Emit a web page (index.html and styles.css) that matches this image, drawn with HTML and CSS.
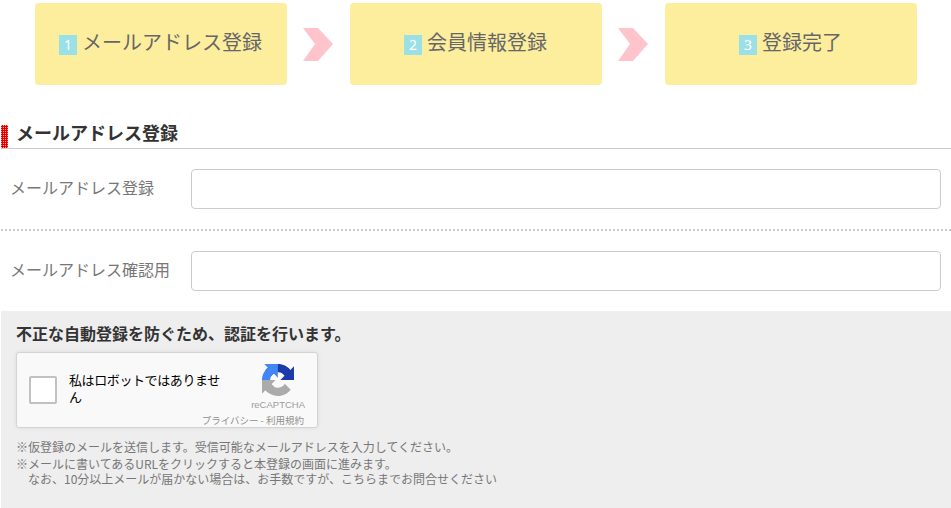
FILE: index.html
```html
<!DOCTYPE html>
<html lang="ja">
<head>
<meta charset="utf-8">
<title>メールアドレス登録</title>
<link rel="stylesheet" href="styles.css">
</head>
<body>
<div class="steps">
  <div class="step"><span class="num">1</span><span class="step-label">メールアドレス登録</span></div>
  <svg class="arrow" viewBox="0 0 30 33"><polygon points="0,0 15,0 30,16 15,33 0,33 12,16"/></svg>
  <div class="step"><span class="num">2</span><span class="step-label">会員情報登録</span></div>
  <svg class="arrow" viewBox="0 0 30 33"><polygon points="0,0 15,0 30,16 15,33 0,33 12,16"/></svg>
  <div class="step"><span class="num">3</span><span class="step-label">登録完了</span></div>
</div>
<main class="content">
  <h2 class="section-title"><span class="marker"></span>メールアドレス登録</h2>
  <div class="row row-first">
    <label class="row-label">メールアドレス登録</label>
    <input class="field" type="text">
  </div>
  <div class="row row-second">
    <label class="row-label">メールアドレス確認用</label>
    <input class="field" type="text">
  </div>
  <section class="verify">
    <h3 class="verify-title">不正な自動登録を防ぐため、認証を行います。</h3>
    <div class="captcha">
      <span class="check"></span>
      <span class="captcha-text">私はロボットではありません</span>
      <div class="captcha-brand">
        <svg class="captcha-logo" viewBox="0 0 64 64">
          <path fill="#1c3aa9" d="M64 31.955l-.033-1.37V4.687l-7.16 7.16C50.948 4.674 42.033.093 32.05.093c-10.4 0-19.622 4.96-25.458 12.64l11.736 11.86c1.15-2.127 2.784-3.954 4.75-5.33 2.05-1.6 4.952-2.908 8.97-2.908.486 0 .86.057 1.136.163 4.977.393 9.29 3.14 11.83 7.126l-8.306 8.306c10.52-.04 22.4-.066 27.3.004"/>
          <path fill="#4285f4" d="M31.862.094l-1.37.033H4.594l7.16 7.16C4.58 13.147 0 22.06 0 32.046c0 10.4 4.96 19.622 12.64 25.458l11.86-11.736c-2.127-1.15-3.954-2.784-5.33-4.75-1.6-2.05-2.908-4.952-2.908-8.97 0-.486.057-.86.163-1.136.393-4.977 3.14-9.29 7.126-11.83l8.306 8.306c-.04-10.52-.066-22.4.004-27.3"/>
          <path fill="#ababab" d="M.001 32.045l.033 1.37v25.898l7.16-7.16c5.86 7.173 14.774 11.754 24.76 11.754 10.4 0 19.622-4.96 25.458-12.64l-11.736-11.86c-1.15 2.127-2.784 3.954-4.75 5.33-2.05 1.6-4.952 2.908-8.97 2.908-.486 0-.86-.057-1.136-.163-4.977-.393-9.29-3.14-11.83-7.126l8.306-8.306c-10.52.04-22.4.066-27.3-.004"/>
        </svg>
        <span class="brand-name">reCAPTCHA</span>
        <span class="brand-links">プライバシー - 利用規約</span>
      </div>
    </div>
    <p class="note">※仮登録のメールを送信します。受信可能なメールアドレスを入力してください。</p>
    <p class="note">※メールに書いてあるURLをクリックすると本登録の画面に進みます。<br>　なお、10分以上メールが届かない場合は、お手数ですが、こちらまでお問合せください</p>
  </section>
</main>
</body>
</html>
```
FILE: styles.css
```css
* { box-sizing: border-box; }
html, body { margin: 0; height: 508px; overflow: hidden; background: #fff; }
body { font-family: "Noto Sans CJK JP", "Noto Sans", sans-serif; color: #555; }
.steps { display: flex; align-items: center; padding: 3px 0 0 35px; }
.step { width: 252px; height: 82px; background: #fdee9e; border-radius: 4px; display: flex; align-items: center; justify-content: center; }
.arrow { width: 30px; height: 33px; margin: 0 17px 0 16px; fill: #ffc4cb; flex: none; }
.num { width: 18px; height: 20px; background: #9be0e6; color: #fff; font: 14px/20px "Noto Sans", sans-serif; text-align: center; margin-right: 5px; margin-top: 2px; }
.step-label { font-size: 20px; line-height: 26px; color: #666; padding-bottom: 4px; margin-right: 1px; }
.content { margin-left: 1px; }
.section-title { margin: 40px 0 0; height: 24px; border-bottom: 1px solid #ccc; font-size: 18px; line-height: 15px; font-weight: 700; color: #333; display: flex; position: relative; padding-left: 15px; }
.marker { position: absolute; left: 0; top: 0; width: 7px; height: 23px; background: repeating-conic-gradient(#e00000 0 75%, #f6b0b0 0 100%) 0 0 / 2px 2px; }
.row { display: flex; align-items: center; }
.row-first { padding: 20px 10px 20px 9px; border-bottom: 2px dotted #ccc; }
.row-second { padding: 20px 10px 20px 9px; }
.row-label { width: 181px; flex: none; font-size: 16px; color: #777; padding-bottom: 5px; }
.field { width: 750px; height: 40px; border: 1px solid #ccc; border-radius: 4px; background: #fff; }
.verify { background: #eee; height: 197px; padding: 12px 15px 0; }
.verify-title { margin: 0 0 9px; font-size: 16px; line-height: 20px; font-weight: 700; color: #333; }
.captcha { width: 302px; height: 76px; background: #f9f9f9; border: 1px solid #d3d3d3; border-radius: 3px; box-shadow: 0 0 4px rgba(0,0,0,.08); display: flex; align-items: center; position: relative; padding: 0 0 4px 12px; margin-bottom: 11px; }
.check { width: 28px; height: 28px; background: #fff; border: 2px solid #c1c1c1; border-radius: 2px; flex: none; margin-top: 4px; }
.captcha-text { width: 156px; margin-left: 12px; font-size: 13px; line-height: 17px; color: #000; letter-spacing: -0.4px; }
.captcha-brand { position: absolute; right: 0; top: 0; bottom: 0; }
.captcha-logo { width: 32px; height: 32px; position: absolute; top: 11px; right: 23px; }
.brand-name { position: absolute; top: 46px; right: 12px; font: 400 9.500px/12px "Liberation Sans", sans-serif; color: #9b9b9b; white-space: nowrap; }
.brand-links { position: absolute; top: 60px; right: 13px; font-size: 9.500px; line-height: 14px; color: #8f8f8f; white-space: nowrap; }
.note { margin: 0 0 2px; font-size: 12px; line-height: 15px; color: #777; }
```
